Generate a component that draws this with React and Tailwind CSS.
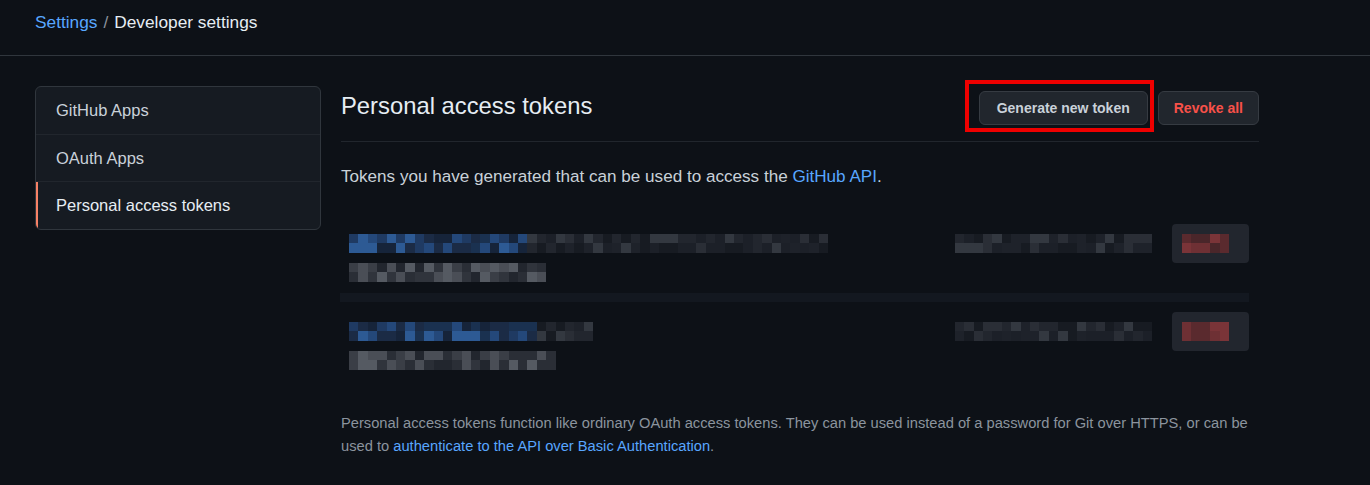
import React from 'react';

const FONT = { fontFamily: '"Liberation Sans", Arial, sans-serif' };

// deterministic shade picker for the blurred (pixelated) token rows
function rng(seed) {
  let s = seed >>> 0;
  return () => {
    s = (s * 1664525 + 1013904223) >>> 0;
    return s / 4294967296;
  };
}

function Mosaic({ cols, rows = 2, palette, seed, cell = 9.4 }) {
  const r = rng(seed);
  const cells = [];
  for (let y = 0; y < rows; y++) {
    for (let x = 0; x < cols; x++) {
      const p = typeof palette === 'function' ? palette(x, cols) : palette;
      cells.push(<div key={`${x}-${y}`} style={{ width: cell, height: cell, background: p[Math.floor(r() * p.length)] }} />);
    }
  }
  return (
    <div className="grid" style={{ gridTemplateColumns: `repeat(${cols}, ${cell}px)` }}>
      {cells}
    </div>
  );
}

const BLUE = ['#1b2b45', '#1f3a62', '#24487a', '#16243a', '#2d5a94', '#1a3150'];
const GRAY = ['#1c2028', '#22262e', '#2a2e36', '#171b22', '#333840', '#1e222a'];
const LIGHT = ['#2a2e36', '#3a3e46', '#4a4e56', '#22262e', '#555a62', '#30343c'];
const RED = ['#5a2a2e', '#6e3034', '#7a3438', '#4a262a'];

function TokenRow({ seed, firstCols, blueCols, secondCols, top, height }) {
  return (
    <div className="flex items-start pl-[9px]" style={{ height, paddingTop: top }}>
      <div className="flex flex-col gap-[10px] w-[600px]">
        <Mosaic cols={firstCols} seed={seed} palette={(x) => (x < blueCols ? BLUE : GRAY)} />
        <Mosaic cols={secondCols} seed={seed + 7} palette={LIGHT} />
      </div>
      <div className="ml-auto flex items-start gap-[20px]">
        <Mosaic cols={21} seed={seed + 3} palette={GRAY} />
        <div className="-mt-[10px] bg-[#22262e] py-[10px] pl-[10px] pr-[20px] rounded-sm">
          <Mosaic cols={5} seed={seed + 11} palette={RED} />
        </div>
      </div>
    </div>
  );
}

export default function App() {
  return (
    <div className="min-h-screen w-[1370px] h-[485px] bg-[#0d1117] text-[#c9d1d9] overflow-hidden" style={FONT}>
      <div className="h-[56px] border-b border-[#30363d] px-[35px] flex items-center pb-[10px]">
        <div className="text-[17.3px]">
          <a className="text-[#58a6ff]">Settings</a>
          <span className="text-[#8b949e] mx-[6px]">/</span>
          <span className="text-[#e6edf3]">Developer settings</span>
        </div>
      </div>

      <div className="flex px-[35px] pt-[30px] gap-[20px]">
        <nav className="w-[286px] shrink-0 self-start bg-[#161b22] border border-[#30363d] rounded-md overflow-hidden text-[16.5px]">
          <div className="h-[48px] flex items-center pl-[20px] border-b border-[#21262d] text-[#c9d1d9]">GitHub Apps</div>
          <div className="h-[47px] flex items-center pl-[20px] border-b border-[#21262d] text-[#c9d1d9]">OAuth Apps</div>
          <div className="h-[47px] flex items-center pl-[18px] border-l-2 border-[#f78166] text-[#e6edf3]">Personal access tokens</div>
        </nav>

        <main className="w-[918px]">
          <div className="flex items-center mt-[5px] pb-4 border-b border-[#21262d]">
            <h2 className="text-[23.8px] text-[#e6edf3] -mt-[4px]">Personal access tokens</h2>
            <div className="ml-auto flex items-center gap-[10px]">
              <div className="relative">
                <button className="h-[34px] px-[17px] bg-[#21262d] border border-[#363b42] rounded-md text-[14px] font-bold text-[#c9d1d9]">
                  Generate new token
                </button>
                <div className="absolute -left-[14px] -right-[6px] -top-[11px] -bottom-[7px] border-[4px] border-[#ee0000] pointer-events-none" />
              </div>
              <button className="h-[34px] px-[15px] bg-[#21262d] border border-[#363b42] rounded-md text-[14px] font-bold text-[#f85149]">
                Revoke all
              </button>
            </div>
          </div>

          <p className="mt-[23px] text-[17.1px] leading-6 text-[#c9d1d9]">
            Tokens you have generated that can be used to access the <a className="text-[#58a6ff]">GitHub API</a>.
          </p>

          <div className="mt-[18px] w-[909px] -ml-[1px]">
            <TokenRow seed={17} firstCols={51} blueCols={19} secondCols={21} top={27} height={86} />
            <div className="h-[9px] bg-[#131820]" />
            <TokenRow seed={42} firstCols={26} blueCols={20} secondCols={22} top={20} height={88} />
          </div>

          <p className="mt-[22px] text-[14.7px] leading-[23px] text-[#8b949e]">
            Personal access tokens function like ordinary OAuth access tokens. They can be used instead of a password for Git over HTTPS, or can be used to{' '}
            <a className="text-[#58a6ff]">authenticate to the API over Basic Authentication</a>.
          </p>
        </main>
      </div>
    </div>
  );
}
